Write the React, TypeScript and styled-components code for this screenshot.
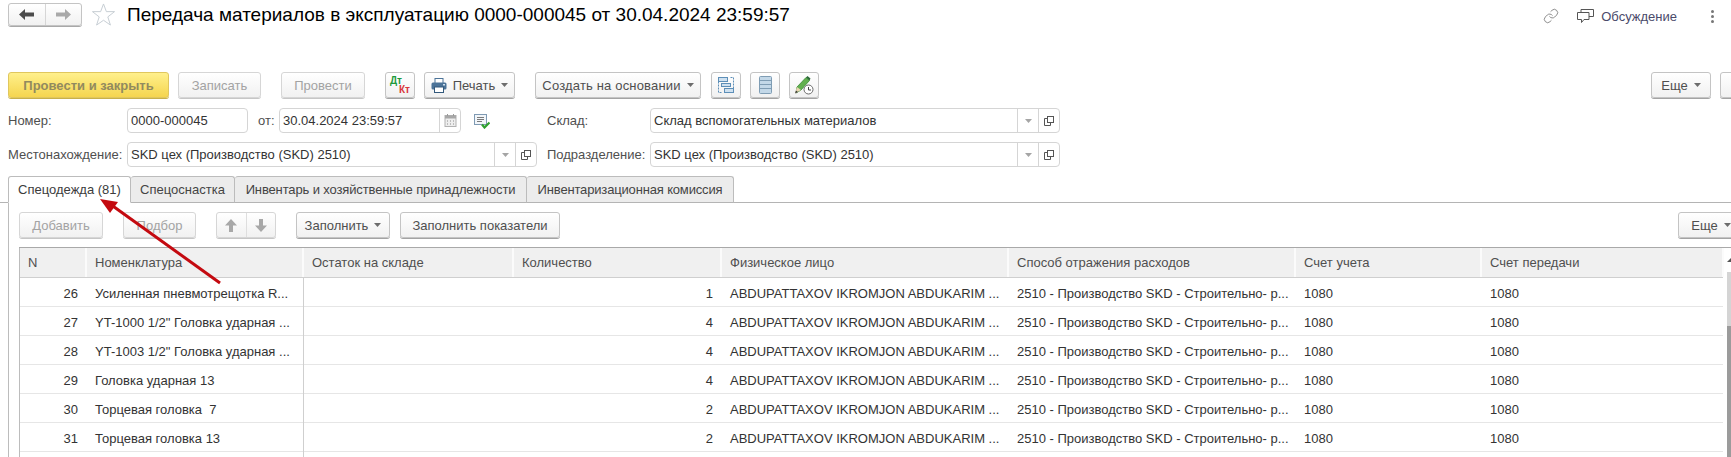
import React from "react";
import styled, { createGlobalStyle } from "styled-components";
import { Link } from "lucide-react";

const GlobalStyle = createGlobalStyle`
  html, body {
    margin: 0;
    padding: 0;
    background: #fff;
    overflow: hidden;
  }
  * {
    box-sizing: border-box;
  }
`;

const columns = "67px 217px 210px 208px 287px 287px 186px 242px";

const rows = [
  ["26", "Усиленная пневмотрещотка R...", "1"],
  ["27", 'YT-1000 1/2" Головка ударная ...', "4"],
  ["28", 'YT-1003 1/2" Головка ударная ...', "4"],
  ["29", "Головка ударная 13", "4"],
  ["30", "Торцевая головка  7", "2"],
  ["31", "Торцевая головка 13", "2"],
];

const Caret = () => (
  <svg width="7" height="4" viewBox="0 0 7 4">
    <path d="M0 0h7L3.500 4z" fill="#6d6d6d" />
  </svg>
);

const PickIcon = () => (
  <svg width="10" height="10" viewBox="0 0 10 10" fill="none" stroke="#555">
    <rect x="3.500" y="0.500" width="6" height="6" />
    <path d="M3.500 2.500H.5v7h6V6.500" />
  </svg>
);

const PrintIcon = () => (
  <svg width="16" height="15" viewBox="0 0 16 15">
    <rect x="4" y="0.500" width="8" height="5" fill="#fff" stroke="#4b7398" />
    <rect x="0.500" y="4.500" width="15" height="7" rx="1.500" fill="#4b7398" />
    <rect x="3.500" y="9" width="9" height="5.500" fill="#fff" stroke="#33597c" />
    <rect x="12" y="6" width="2" height="1.500" fill="#cfe0ee" />
  </svg>
);

const StructureIcon = () => (
  <svg width="18" height="18" viewBox="0 0 18 18" fill="none" stroke="#5d8fb8">
    <rect x="1.500" y="1.500" width="9" height="4" fill="#cfe1f0" />
    <rect x="7.500" y="12.500" width="9" height="4" fill="#cfe1f0" />
    <rect x="4.500" y="7.500" width="9" height="3" fill="#cfe1f0" />
    <path d="M1.500 5.500v11h4M16.500 12.500v-11h-4" strokeDasharray="2 1" />
  </svg>
);

const ListIcon = () => (
  <svg width="13" height="18" viewBox="0 0 13 18" fill="#c3d8e8" stroke="#7f9db4">
    <rect x="0.500" y="0.500" width="12" height="17" rx="1" />
    <path d="M.5 4.500h12M.5 8.500h12M.5 12.500h12" fill="none" />
  </svg>
);

const PencilClockIcon = () => (
  <svg width="20" height="20" viewBox="0 0 20 20">
    <path d="M3 12 12 2.500l3.500 3L7 15l-5 3z" fill="#62b04f" stroke="#3a8a36" strokeWidth="0.800" />
    <path d="M1 18.500 3 12l4 3z" fill="#e8d6b0" />
    <path d="M1 18.500 2 15.500l2 1.500z" fill="#3c3c3c" />
    <path d="M12 2.500l1.500-1.500 3 2.500-1 2z" fill="#2d6b3a" />
    <circle cx="14.500" cy="14.500" r="4.500" fill="#fff" stroke="#6a6a6a" />
    <path d="M14.500 12v3h2.500" fill="none" stroke="#444" />
  </svg>
);

const CalendarIcon = () => (
  <svg width="13" height="13" viewBox="0 0 13 13">
    <rect x="1" y="1.500" width="11" height="11" fill="#eeeeee" stroke="#b2b2b2" />
    <rect x="1" y="1.500" width="11" height="3" fill="#a8a8a8" />
    <path d="M3.500 0v2M9.500 0v2" stroke="#999" />
    <path d="M3 7h1M6 7h1M9 7h1M3 10h1M6 10h1M9 10h1" stroke="#8c8c8c" />
  </svg>
);

const PostedIcon = () => (
  <svg width="16" height="15" viewBox="0 0 16 15" fill="none">
    <rect x="0.500" y="0.500" width="12" height="10" fill="#f2f6fa" stroke="#7f9ab3" />
    <path d="M3 3.500h7M3 5.500h7M3 7.500h5" stroke="#7a7a7a" />
    <path d="M8 10.500l2.500 3 5-5" stroke="#2fa02f" strokeWidth="2.200" />
  </svg>
);

const ChatIcon = () => (
  <svg width="17" height="17" viewBox="0 0 17 17" fill="none" stroke="#555">
    <path d="M.5 4.500h11.500v7H7l-2.500 3v-3H.5z" fill="#fff" />
    <path d="M4 4.500V1.500h12.500v7h-4.500" />
  </svg>
);

const ArrowIcon = ({ left, color }: { left?: boolean; color: string }) => (
  <svg width="15" height="11" viewBox="0 0 15 11" style={{ transform: left ? "none" : "scaleX(-1)" }}>
    <path d="M0 5.500 6 0v3.500h9v4H6V11z" fill={color} />
  </svg>
);

const VerticalArrow = ({ up }: { up?: boolean }) => (
  <svg width="12" height="13" viewBox="0 0 12 13" style={{ transform: up ? "none" : "scaleY(-1)" }}>
    <path d="M6 0l6 6.500H8V13H4V6.500H0z" fill="#a8a8a8" />
  </svg>
);

const Segment = ({ children }: { children: React.ReactNode }) => <FieldButton>{children}</FieldButton>;

const SelectButtons = () => (
  <>
    <Segment>
      <svg width="7" height="4" viewBox="0 0 7 4">
        <path d="M0 0h7L3.500 4z" fill="#a5a5a5" />
      </svg>
    </Segment>
    <Segment>
      <PickIcon />
    </Segment>
  </>
);

const App: React.FC = () => {
  return (
    <Page>
      <GlobalStyle />
      <TitleBar>
        <NavGroup>
          <NavButton>
            <ArrowIcon left color="#4c4c4c" />
          </NavButton>
          <NavButton>
            <ArrowIcon color="#a9a9a9" />
          </NavButton>
        </NavGroup>
        <StarBox>
          <svg width="23" height="23" viewBox="0 0 24 24" fill="none" stroke="#c4ccd2">
            <path d="M12 1l3 8h8.500l-7 5.500 2.700 8.500L12 18l-7.200 5 2.700-8.500-7-5.500H9z" />
          </svg>
        </StarBox>
        <Title>Передача материалов в эксплуатацию 0000-000045 от 30.04.2024 23:59:57</Title>
        <TopRight>
          <Link size={16} strokeWidth={1.1} color="#666" />
          <DiscussLink>
            <ChatIcon />
            <span>Обсуждение</span>
          </DiscussLink>
          <Dots>
            <i />
            <i />
            <i />
          </Dots>
        </TopRight>
      </TitleBar>

      <CommandBar>
        <Button $w={161} $primary $disabled>
          Провести и закрыть
        </Button>
        <Button $w={83} $ml={9} $disabled>
          Записать
        </Button>
        <Button $w={84} $ml={20} $disabled>
          Провести
        </Button>
        <Button $w={30} $ml={20}>
          <DtKt>
            <b>Дт</b>
            <em>Кт</em>
          </DtKt>
        </Button>
        <Button $w={91} $ml={9}>
          <PrintIcon />
          Печать
          <Caret />
        </Button>
        <Button $w={166} $ml={20} $track={0.17}>
          Создать на основании
          <Caret />
        </Button>
        <Button $w={30} $ml={10}>
          <StructureIcon />
        </Button>
        <Button $w={30} $ml={9}>
          <ListIcon />
        </Button>
        <Button $w={30} $ml={9}>
          <PencilClockIcon />
        </Button>
        <Button $w={60} $ml={832}>
          Еще
          <Caret />
        </Button>
        <Button $w={40} $ml={9} />
      </CommandBar>

      <FieldRow>
        <Label $w={119}>Номер:</Label>
        <Field $w={121}>
          <FieldText>0000-000045</FieldText>
        </Field>
        <Label $w={21} $ml={10}>
          от:
        </Label>
        <Field $w={182}>
          <FieldText>30.04.2024 23:59:57</FieldText>
          <Segment>
            <CalendarIcon />
          </Segment>
        </Field>
        <StatusIcon>
          <PostedIcon />
        </StatusIcon>
        <Label $w={103} $ml={57}>
          Склад:
        </Label>
        <Field $w={410}>
          <FieldText>Склад вспомогательных материалов</FieldText>
          <SelectButtons />
        </Field>
      </FieldRow>

      <FieldRow>
        <Label $w={119}>Местонахождение:</Label>
        <Field $w={410}>
          <FieldText>SKD цех (Производство (SKD) 2510)</FieldText>
          <SelectButtons />
        </Field>
        <Label $w={103} $ml={10}>
          Подразделение:
        </Label>
        <Field $w={410}>
          <FieldText>SKD цех (Производство (SKD) 2510)</FieldText>
          <SelectButtons />
        </Field>
      </FieldRow>

      <Tabs>
        <Tab $w={123} $active>
          Спецодежда (81)
        </Tab>
        <Tab $w={104}>Спецоснастка</Tab>
        <Tab $w={292} $track={-0.13}>
          Инвентарь и хозяйственные принадлежности
        </Tab>
        <Tab $w={207} $track={-0.16}>
          Инвентаризационная комиссия
        </Tab>
      </Tabs>

      <Panel>
        <CommandBar $flush>
          <Button $w={84} $disabled>
            Добавить
          </Button>
          <Button $w={73} $ml={20} $disabled>
            Подбор
          </Button>
          <ArrowGroup>
            <ArrowCell>
              <VerticalArrow up />
            </ArrowCell>
            <ArrowCell>
              <VerticalArrow />
            </ArrowCell>
          </ArrowGroup>
          <Button $w={94} $ml={20}>
            Заполнить
            <Caret />
          </Button>
          <Button $w={160} $ml={10}>
            Заполнить показатели
          </Button>
          <Button $w={66} $ml={1118}>
            Еще
            <Caret />
          </Button>
        </CommandBar>

        <TableWrap>
          <Table>
            <HeadRow>
              <HeadCell>N</HeadCell>
              <HeadCell>Номенклатура</HeadCell>
              <HeadCell>Остаток на складе</HeadCell>
              <HeadCell>Количество</HeadCell>
              <HeadCell>Физическое лицо</HeadCell>
              <HeadCell>Способ отражения расходов</HeadCell>
              <HeadCell>Счет учета</HeadCell>
              <HeadCell>Счет передачи</HeadCell>
            </HeadRow>
            {rows.map(([n, name, qty]) => (
              <Row key={n}>
                <Cell $right>{n}</Cell>
                <Cell $divider>{name}</Cell>
                <Cell />
                <Cell $right>{qty}</Cell>
                <Cell>ABDUPATTAXOV IKROMJON ABDUKARIM ...</Cell>
                <Cell>2510 - Производство SKD - Строительно- р...</Cell>
                <Cell>1080</Cell>
                <Cell>1080</Cell>
              </Row>
            ))}
            <Row>
              <Cell />
              <Cell $divider />
            </Row>
          </Table>
          <ScrollBar>
            <svg width="4" height="4" viewBox="0 0 4 4">
              <path d="M0 4 4 0v4z" fill="#555" />
            </svg>
            <ScrollLight />
            <ScrollDark />
          </ScrollBar>
        </TableWrap>
      </Panel>

      <Pointer width="130" height="95" viewBox="0 0 130 95">
        <path d="M122 87 12 8" stroke="#c40a10" strokeWidth="3" fill="none" />
        <path d="M2 3l18 3-8 11z" fill="#c40a10" />
      </Pointer>
    </Page>
  );
};

export default App;

const Page = styled.div`
  position: relative;
  width: 1731px;
  height: 457px;
  overflow: hidden;
  font-family: "Liberation Sans", Arial, sans-serif;
  font-size: 13px;
  color: #4f4f4f;
`;

const TitleBar = styled.div`
  display: flex;
  align-items: flex-start;
  height: 72px;
  padding: 3px 0 0 8px;
`;

const NavGroup = styled.div`
  display: flex;
  width: 74px;
  height: 23px;
  border: 1px solid #c4c4c4;
  border-radius: 3px;
  box-shadow: 0 1px 0 #a8a8a8;
  background: linear-gradient(#fff, #f1f1f1);
`;

const NavButton = styled.div`
  flex: 1;
  display: flex;
  align-items: center;
  justify-content: center;

  & + & {
    border-left: 1px solid #d6d6d6;
  }
`;

const StarBox = styled.div`
  width: 23px;
  height: 23px;
  margin-left: 10px;
`;

const Title = styled.h1`
  margin: 0 0 0 12px;
  font-size: 19px;
  font-weight: 400;
  line-height: 24px;
  color: #000;
  white-space: nowrap;
`;

const TopRight = styled.div`
  display: flex;
  align-items: center;
  margin-left: auto;
  height: 22px;
  margin-top: 2px;
`;

const DiscussLink = styled.div`
  display: flex;
  align-items: center;
  gap: 7px;
  margin-left: 18px;
  font-size: 13px;
  color: #4a4a6a;
`;

const Dots = styled.div`
  display: flex;
  flex-direction: column;
  gap: 2px;
  margin: 0 17px 0 34px;

  i {
    display: block;
    width: 3px;
    height: 3px;
    background: #777;
    border-radius: 50%;
  }
`;

const CommandBar = styled.div<{ $flush?: boolean }>`
  display: flex;
  align-items: stretch;
  height: 26px;
  padding-left: ${(p) => (p.$flush ? 0 : 8)}px;
  flex-shrink: 0;
`;

const Button = styled.div<{ $w: number; $ml?: number; $primary?: boolean; $disabled?: boolean; $track?: number }>`
  display: flex;
  align-items: center;
  justify-content: center;
  gap: 6px;
  flex-shrink: 0;
  width: ${(p) => p.$w}px;
  margin-left: ${(p) => p.$ml || 0}px;
  letter-spacing: ${(p) => p.$track || 0}px;
  white-space: nowrap;
  border-radius: 3px;
  border: 1px solid ${(p) => (p.$primary ? "#e0c75e" : p.$disabled ? "#d6d6d6" : "#c4c4c4")};
  box-shadow: 0 1px 0 ${(p) => (p.$primary ? "#c8b04a" : p.$disabled ? "#c6c6c6" : "#a3a3a3")};
  background: ${(p) => (p.$primary ? "linear-gradient(#fff08c, #f5d54f)" : "linear-gradient(#fff, #f1f1f1)")};
  color: ${(p) => (p.$primary ? "#918a5f" : p.$disabled ? "#a3a3a3" : "#4f4f4f")};
  font-weight: ${(p) => (p.$primary ? 700 : 400)};
`;

const DtKt = styled.div`
  display: flex;
  flex-direction: column;
  width: 20px;
  font-size: 10px;
  line-height: 9px;

  b {
    font-weight: 700;
    color: #1c9a3c;
  }

  em {
    align-self: flex-end;
    font-style: normal;
    font-weight: 700;
    color: #d9373a;
  }
`;

const FieldRow = styled.div`
  display: flex;
  align-items: center;
  height: 25px;
  margin-top: 9px;
  padding-left: 8px;

  ${CommandBar} + & {
    margin-top: 10px;
  }
`;

const Label = styled.div<{ $w: number; $ml?: number }>`
  flex-shrink: 0;
  width: ${(p) => p.$w}px;
  margin-left: ${(p) => p.$ml || 0}px;
  white-space: nowrap;
`;

const Field = styled.div<{ $w: number }>`
  display: flex;
  flex-shrink: 0;
  width: ${(p) => p.$w}px;
  height: 25px;
  border: 1px solid #d5d5d5;
  border-radius: 4px;
  color: #333;
`;

const FieldText = styled.div`
  flex: 1;
  padding-left: 3px;
  line-height: 23px;
  white-space: nowrap;
`;

const FieldButton = styled.div`
  display: flex;
  align-items: center;
  justify-content: center;
  width: 21px;
  border-left: 1px solid #d5d5d5;
`;

const StatusIcon = styled.div`
  display: flex;
  width: 16px;
  margin-left: 13px;
  padding-top: 2px;
`;

const Tabs = styled.div`
  display: flex;
  height: 27px;
  margin-top: 9px;
  padding-left: 8px;
  border-bottom: 1px solid #b4b4b4;
  flex-shrink: 0;
`;

const Tab = styled.div<{ $w: number; $active?: boolean; $track?: number }>`
  width: ${(p) => p.$w}px;
  height: 27px;
  text-align: center;
  line-height: 26px;
  white-space: nowrap;
  letter-spacing: ${(p) => p.$track || 0}px;
  color: ${(p) => (p.$active ? "#3c3c3c" : "#444")};
  background: ${(p) => (p.$active ? "#fff" : "#ececec")};
  border: 1px solid #bcbcbc;
  border-left-width: ${(p) => (p.$active ? 1 : 0)}px;
  border-bottom-color: ${(p) => (p.$active ? "#fff" : "#b4b4b4")};
  border-radius: 3px 3px 0 0;
`;

const Panel = styled.div`
  margin-left: 8px;
  padding: 9px 0 0 10px;
  height: 254px;
  border-left: 1px solid #bcbcbc;
`;

const ArrowGroup = styled.div`
  display: flex;
  flex-shrink: 0;
  width: 60px;
  margin-left: 20px;
  border: 1px solid #d6d6d6;
  border-radius: 3px;
  box-shadow: 0 1px 0 #c6c6c6;
  background: linear-gradient(#fff, #f1f1f1);
`;

const ArrowCell = styled.div`
  flex: 1;
  display: flex;
  align-items: center;
  justify-content: center;

  & + & {
    border-left: 1px solid #dedede;
  }
`;

const TableWrap = styled.div`
  display: flex;
  margin-top: 9px;
  border-top: 1px solid #a9a9a9;
`;

const Table = styled.div`
  width: 1704px;
  border-left: 1px solid #bcbcbc;
`;

const HeadRow = styled.div`
  display: grid;
  grid-template-columns: ${columns};
  height: 30px;
  background: #f0f0f0;
  border-bottom: 1px solid #cfcfcf;
`;

const HeadCell = styled.div`
  padding-left: 8px;
  line-height: 29px;
  border-right: 2px solid #fbfbfb;
  white-space: nowrap;
`;

const Row = styled.div`
  display: grid;
  grid-template-columns: ${columns};
  height: 29px;
  border-bottom: 1px solid #e6e6e6;
  color: #333;
`;

const Cell = styled.div<{ $right?: boolean; $divider?: boolean }>`
  padding: 0 ${(p) => (p.$right ? 9 : 0)}px 0 ${(p) => (p.$right ? 0 : 8)}px;
  line-height: 31px;
  text-align: ${(p) => (p.$right ? "right" : "left")};
  white-space: pre;
  overflow: hidden;
  ${(p) => (p.$divider ? "border-right: 1px solid #cfcfcf; height: 29px;" : "")}
`;

const ScrollBar = styled.div`
  display: flex;
  flex-direction: column;
  align-items: flex-end;
  width: 8px;
  padding-top: 10px;
`;

const ScrollLight = styled.div`
  width: 4px;
  height: 54px;
  margin-top: 10px;
  background: #d4d4d4;
`;

const ScrollDark = styled.div`
  width: 4px;
  flex: 1;
  background: #9b9b9b;
`;

const Pointer = styled.svg`
  position: absolute;
  left: 98px;
  top: 196px;
`;
